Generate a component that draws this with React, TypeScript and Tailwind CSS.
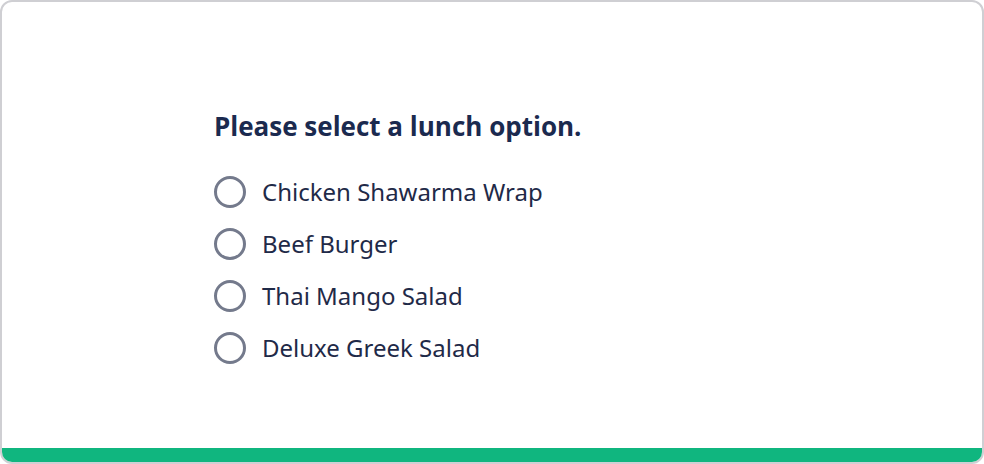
const options = ["Chicken Shawarma Wrap", "Beef Burger", "Thai Mango Salad", "Deluxe Greek Salad"];

export default function App() {
  return (
    <div className="h-[464px] w-[984px] bg-white">
      <div className="flex h-full flex-col overflow-hidden rounded-[12px] border-2 border-[#cfcfd3] bg-white">
        <div className="flex-1 pl-[212px] pt-[106px]">
          <h1 className="font-['Open_Sans',sans-serif] text-[26px] font-bold leading-[36px] text-[#1b2a4f]">
            Please select a lunch option.
          </h1>
          <div className="mt-[32px] flex flex-col gap-[20px]">
            {options.map((option) => (
              <label key={option} className="flex items-center gap-[16px]">
                <span className="h-[32px] w-[32px] shrink-0 rounded-full border-[3px] border-[#747a8c] bg-white" />
                <span className="font-['Noto_Sans',sans-serif] text-[24px] leading-[32px] text-[#1f2a48]">
                  {option}
                </span>
              </label>
            ))}
          </div>
        </div>
        <div className="h-[14px] bg-[#10b67f]" />
      </div>
    </div>
  );
}
